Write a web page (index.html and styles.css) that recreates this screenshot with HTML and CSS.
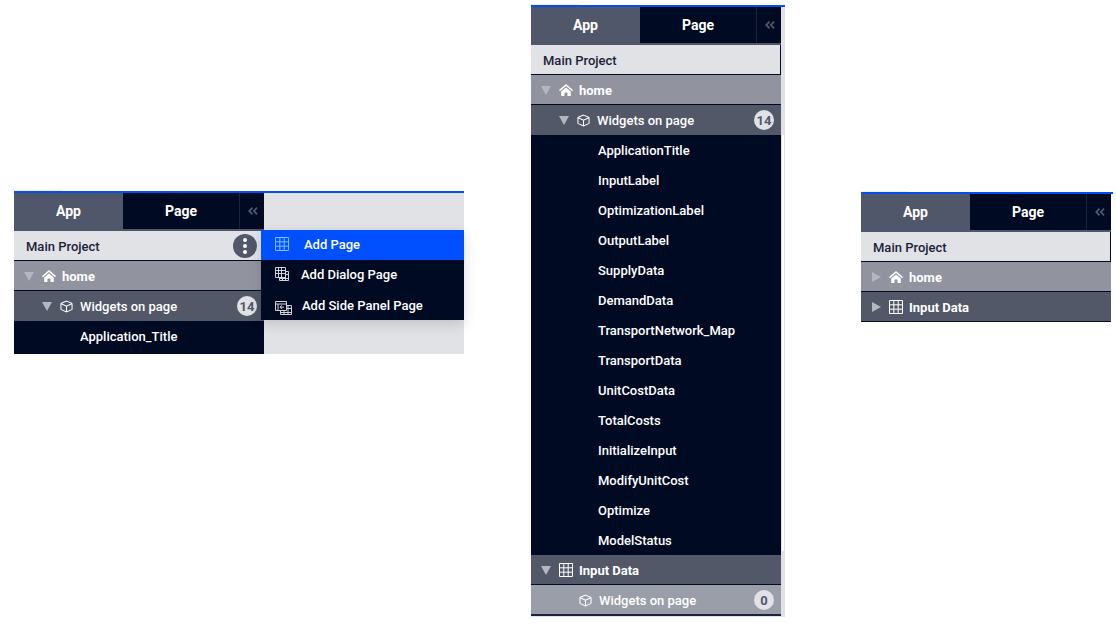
FILE: index.html
```html
<!DOCTYPE html>
<html lang="en">
<head>
<meta charset="utf-8">
<title>Page navigator</title>
<link rel="stylesheet" href="styles.css">
</head>
<body>
<svg class="defs" width="0" height="0" aria-hidden="true">
  <symbol id="i-home" viewBox="0 0 14 12"><path d="M7 0 14 6 13 7.200 7 2 1 7.200 0 6z" fill="currentColor"/><path d="M7 3.500 11.800 7.500V12H8.500V8.500H5.500V12H2.200V7.500z" fill="currentColor"/></symbol>
  <symbol id="i-cube" viewBox="0 0 14 14"><path d="M7 1.200 12.600 3.600c.3.100.4.400.4.700v5.400c0 .3-.2.600-.4.700L7 12.800 1.400 10.400C1.200 10.300 1 10 1 9.700V4.300c0-.3.100-.6.400-.7zM1.300 4 7 6.600 12.700 4M7 6.600v6" fill="none" stroke="currentColor" stroke-width="1.100"/></symbol>
  <symbol id="i-grid" viewBox="0 0 14 14"><path d="M.5.5h13v13H.5zM.5 4.800h13M.5 9.200h13M4.800.5v13M9.200.5v13" fill="none" stroke="currentColor"/></symbol>
  <symbol id="i-dialog" viewBox="0 0 14 14"><path d="M.5.5h10v10H.5zM.5 3.500h10M.5 6.500h10M3.500.5v10M6.500.5v10M4.500 10.500v3h9v-9h-3M4.500 11.500h9M7.500 10.500v3M10.500 4.500v9M10.500 7.500h3" fill="none" stroke="currentColor"/></symbol>
  <symbol id="i-side" viewBox="0 0 17 14"><path d="M.5.500h11v9H.5zM.5 3h11M3 3v6.500M9 6.200H5M7 4.300 5 6.200l2 2M5.500 9.500v4h11v-9h-5M5.500 11.500h11M9 9.500v4M13 4.500v9M11.500 7.500h5" fill="none" stroke="currentColor"/></symbol>
  <symbol id="i-collapse" viewBox="0 0 10 8"><path d="M4.500.700 1.300 4l3.200 3.300M9 .700 5.800 4 9 7.300" fill="none" stroke="currentColor" stroke-width="1.800"/></symbol>
</svg>

<main class="stage">

  <section class="panel panel-menu">
    <div class="bar"></div>
    <div class="body-row">
      <div class="sidebar">
        <div class="tabs">
          <div class="tab tab-app">App</div>
          <div class="tab tab-page">Page</div>
          <div class="tab tab-collapse"><svg class="chev"><use href="#i-collapse"/></svg></div>
        </div>
        <div class="row row-project">Main Project
          <span class="kebab"><i></i><i></i><i></i></span>
        </div>
        <div class="row row-home"><span class="tri tri-down"></span><svg class="ico ico-home"><use href="#i-home"/></svg><b>home</b></div>
        <div class="row row-group row-sub"><span class="tri tri-down"></span><svg class="ico ico-cube"><use href="#i-cube"/></svg><span class="label">Widgets on page</span><span class="badge">14</span></div>
        <div class="leaf leaf-last">Application_Title</div>
      </div>
      <div class="backdrop"></div>
    </div>
    <ul class="menu">
      <li class="menu-item menu-active"><svg class="ico ico-blue"><use href="#i-grid"/></svg><span class="m1">Add Page</span></li>
      <li class="menu-item menu-second"><svg class="ico ico-dim"><use href="#i-dialog"/></svg><span class="m2">Add Dialog Page</span></li>
      <li class="menu-item"><svg class="ico ico-dim ico-side"><use href="#i-side"/></svg><span class="m3">Add Side Panel Page</span></li>
    </ul>
  </section>

  <section class="panel panel-tree">
    <div class="bar"></div>
    <div class="sidebar">
      <div class="tabs">
        <div class="tab tab-app">App</div>
        <div class="tab tab-page">Page</div>
        <div class="tab tab-collapse"><svg class="chev"><use href="#i-collapse"/></svg></div>
      </div>
      <div class="row row-project row-boxed">Main Project</div>
      <div class="row row-home"><span class="tri tri-down"></span><svg class="ico ico-home"><use href="#i-home"/></svg><b>home</b></div>
      <div class="row row-group row-sub"><span class="tri tri-down"></span><svg class="ico ico-cube"><use href="#i-cube"/></svg><span class="label">Widgets on page</span><span class="badge">14</span></div>
      <div class="leaf">ApplicationTitle</div>
      <div class="leaf">InputLabel</div>
      <div class="leaf">OptimizationLabel</div>
      <div class="leaf">OutputLabel</div>
      <div class="leaf">SupplyData</div>
      <div class="leaf">DemandData</div>
      <div class="leaf">TransportNetwork_Map</div>
      <div class="leaf">TransportData</div>
      <div class="leaf">UnitCostData</div>
      <div class="leaf">TotalCosts</div>
      <div class="leaf">InitializeInput</div>
      <div class="leaf">ModifyUnitCost</div>
      <div class="leaf">Optimize</div>
      <div class="leaf">ModelStatus</div>
      <div class="row row-group"><span class="tri tri-down"></span><svg class="ico"><use href="#i-grid"/></svg><b>Input Data</b></div>
      <div class="row row-light"><svg class="ico ico-cube"><use href="#i-cube"/></svg><span class="label">Widgets on page</span><span class="badge">0</span></div>
    </div>
    <div class="thumb"></div>
  </section>

  <section class="panel panel-closed">
    <div class="bar"></div>
    <div class="sidebar">
      <div class="tabs">
        <div class="tab tab-app">App</div>
        <div class="tab tab-page">Page</div>
        <div class="tab tab-collapse"><svg class="chev"><use href="#i-collapse"/></svg></div>
      </div>
      <div class="row row-project row-boxed">Main Project</div>
      <div class="row row-home"><span class="tri tri-right"></span><svg class="ico ico-home"><use href="#i-home"/></svg><b>home</b></div>
      <div class="row row-group"><span class="tri tri-right"></span><svg class="ico"><use href="#i-grid"/></svg><b>Input Data</b></div>
    </div>
  </section>

</main>
</body>
</html>
```
FILE: styles.css
```css
* { box-sizing: border-box; }
html, body { margin: 0; padding: 0; background: #fff; }
body {
  width: 1116px;
  height: 624px;
  overflow: hidden;
  font-family: Roboto, "Liberation Sans", sans-serif;
  font-size: 13px;
  font-weight: 500;
  color: #fff;
}
.defs { position: absolute; }
.stage { display: flex; align-items: flex-start; padding-left: 14px; }

.panel { position: relative; }
.panel::before {
  content: "";
  position: absolute;
  left: 0;
  top: -1px;
  width: 48px;
  height: 1px;
  background: #f1f1f3;
}
.panel-menu { width: 450px; margin-top: 191px; }
.panel-tree { width: 254px; margin: 5px 0 0 67px; background: #e0e2e6; height: 612px; }
.panel-closed { width: 252px; margin: 192px 0 0 76px; }

.bar { height: 2px; background: #0050f0; }

.thumb {
  position: absolute;
  left: 251px;
  top: 130px;
  width: 2px;
  height: 416px;
  background: #fff;
}

.body-row { display: flex; height: 161px; }
.backdrop { flex: 1; background: #e0e2e6; }
.sidebar { width: 250px; flex: none; background: #000a22; }

.tabs { display: flex; height: 38px; background: #50576a; }
.tab {
  height: 36px;
  display: flex;
  align-items: center;
  justify-content: center;
  font-size: 14px;
  font-weight: 700;
}
.tab-app { width: 109px; background: #50576a; height: 38px; padding-bottom: 2px; }
.tab-page { width: 116px; background: #000a22; }
.tab-collapse {
  width: 25px;
  background: #000a22;
  border-left: 1px solid #1a2338;
  color: #4f5669;
}
.chev { width: 10px; height: 8px; margin-left: 1px; }

.row {
  position: relative;
  height: 30px;
  display: flex;
  align-items: center;
  padding: 1px 0 0 10px;
  border-bottom: 1px solid #000a22;
}
.row b { font-weight: 700; }
.row-project {
  padding-left: 12px;
  background: #e0e2e6;
  color: #1c2338;
}
.row-boxed { border-right: 1px solid #000a22; }
.row-home { background: #91939f; }
.row-group { background: #525868; }
.row-sub { padding: 0 0 0 28px; border-bottom: 0; }
.row-light { height: 31px; background: #9a9ea8; padding-left: 48px; border-bottom: 2px solid #1a2440; }

.tri { width: 0; height: 0; margin-right: 8px; flex: none; }
.tri-down { border-style: solid; border-width: 9px 5.5px 0; border-color: #b4b7bf transparent transparent; }
.tri-right { border-style: solid; border-width: 5.5px 0 5.5px 9px; border-color: transparent transparent transparent #b4b7bf; margin-left: 1px; margin-right: 8px; }

.ico { width: 14px; height: 14px; flex: none; margin-right: 6px; color: #fff; }
.ico-home { height: 12px; }
.ico-cube { width: 13px; height: 13px; margin-right: 7px; }
.ico-blue { color: #7cc0ff; }
.ico-dim { color: #d0d2d8; }
.ico-side { width: 17px; margin-top: 6px; }

.badge {
  position: absolute;
  right: 7px;
  top: 5px;
  width: 20px;
  height: 20px;
  border-radius: 50%;
  background: #e0e2e6;
  color: #525868;
  font-size: 13px;
  font-weight: 700;
  display: flex;
  align-items: center;
  justify-content: center;
}

.kebab {
  position: absolute;
  right: 7px;
  top: 3px;
  width: 24px;
  height: 24px;
  border-radius: 50%;
  background: #50576a;
  display: flex;
  flex-direction: column;
  align-items: center;
  justify-content: center;
  gap: 2px;
}
.kebab i { width: 4px; height: 4px; border-radius: 50%; background: #fff; }

.leaf {
  height: 30px;
  display: flex;
  align-items: center;
  padding-left: 67px;
  background: #000a22;
}
.leaf-last { height: 33px; padding-left: 66px; padding-bottom: 2px; }

.menu {
  position: absolute;
  left: 247px;
  top: 39px;
  width: 203px;
  height: 90px;
  margin: 0;
  padding: 0;
  list-style: none;
  background: #000a22;
  box-shadow: 0 4px 12px rgba(0, 0, 0, .14);
}
.menu-item { height: 30px; display: flex; align-items: center; padding-left: 14px; }
.menu-active, .menu-second { padding-bottom: 2px; }
.menu-active { background: #0050ff; }
.m1 { margin-left: 9px; }
.m2 { margin-left: 6px; }
.m3 { margin-left: 4px; }
```
